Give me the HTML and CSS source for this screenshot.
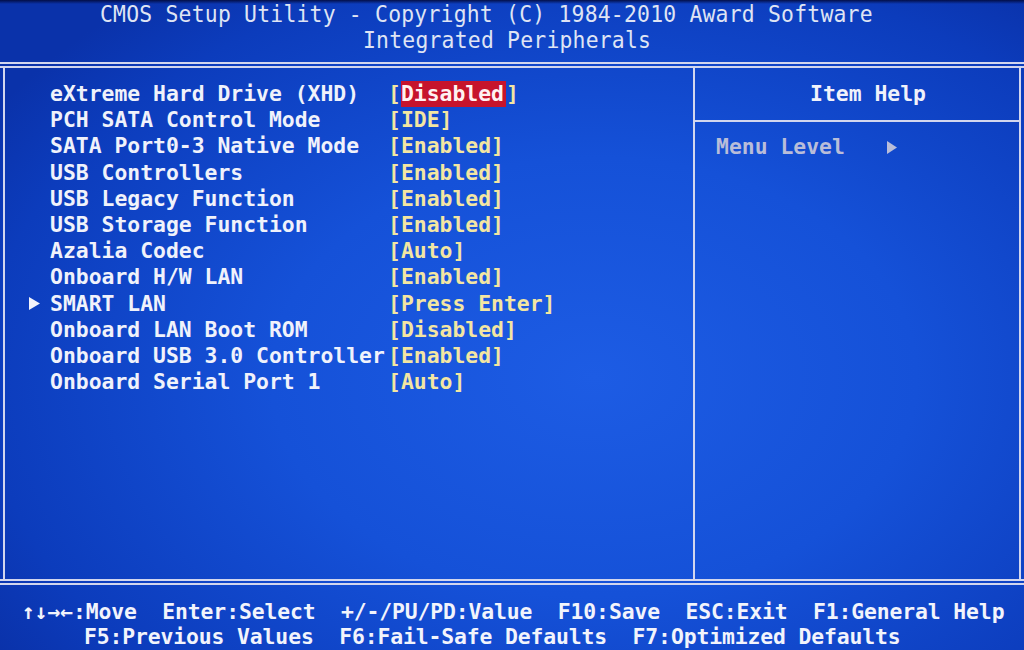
FILE: index.html
```html
<!DOCTYPE html>
<html lang="en">
	<head>
		<meta charset="UTF-8">
		<title>CMOS Setup Utility</title>
		<link rel="stylesheet" href="styles.css">
	</head>
	<body>
		<div class="screen">
			<div class="title">
				<div class="title-line first">CMOS Setup Utility - Copyright (C) 1984-2010 Award Software</div>
				<div class="title-line second">Integrated Peripherals</div>
			</div>

			<div class="frame">
				<div class="panel">
					<div class="settings">
						<div class="row">
							<span class="marker"></span>
							<span class="name">eXtreme Hard Drive (XHD)</span>
							<span class="value">[<span class="selected">Disabled</span>]</span>
						</div>
						<div class="row">
							<span class="marker"></span>
							<span class="name">PCH SATA Control Mode</span>
							<span class="value">[IDE]</span>
						</div>
						<div class="row">
							<span class="marker"></span>
							<span class="name">SATA Port0-3 Native Mode</span>
							<span class="value">[Enabled]</span>
						</div>
						<div class="row">
							<span class="marker"></span>
							<span class="name">USB Controllers</span>
							<span class="value">[Enabled]</span>
						</div>
						<div class="row">
							<span class="marker"></span>
							<span class="name">USB Legacy Function</span>
							<span class="value">[Enabled]</span>
						</div>
						<div class="row">
							<span class="marker"></span>
							<span class="name">USB Storage Function</span>
							<span class="value">[Enabled]</span>
						</div>
						<div class="row">
							<span class="marker"></span>
							<span class="name">Azalia Codec</span>
							<span class="value">[Auto]</span>
						</div>
						<div class="row">
							<span class="marker"></span>
							<span class="name">Onboard H/W LAN</span>
							<span class="value">[Enabled]</span>
						</div>
						<div class="row">
							<span class="marker">
								<svg class="tri" width="11" height="13" viewBox="0 0 11 13"><path d="M0 0 L11 6.5 L0 13 Z" fill="#f2f3fb"/></svg>
							</span>
							<span class="name">SMART LAN</span>
							<span class="value">[Press Enter]</span>
						</div>
						<div class="row">
							<span class="marker"></span>
							<span class="name">Onboard LAN Boot ROM</span>
							<span class="value">[Disabled]</span>
						</div>
						<div class="row">
							<span class="marker"></span>
							<span class="name">Onboard USB 3.0 Controller</span>
							<span class="value">[Enabled]</span>
						</div>
						<div class="row">
							<span class="marker"></span>
							<span class="name">Onboard Serial Port 1</span>
							<span class="value">[Auto]</span>
						</div>
					</div>

					<div class="help">
						<div class="help-head">Item Help</div>
						<div class="help-body">
							<span class="menu-level">Menu Level</span>
							<svg class="help-tri" width="10" height="13" viewBox="0 0 10 13"><path d="M0 0 L10 6.5 L0 13 Z" fill="#b9bdd9"/></svg>
						</div>
					</div>
				</div>
			</div>

			<div class="keys">
				<div class="keys-line">↑↓→←:Move  Enter:Select  +/-/PU/PD:Value  F10:Save  ESC:Exit  F1:General Help</div>
				<div class="keys-line second">F5:Previous Values  F6:Fail-Safe Defaults  F7:Optimized Defaults</div>
			</div>
		</div>
	</body>
</html>
```

FILE: styles.css
```css
html, body {
	margin: 0;
	padding: 0;
}

body {
	width: 1024px;
	height: 650px;
	overflow: hidden;
	font-family: 'DejaVu Sans Mono', 'Liberation Mono', monospace;
	font-size: 21.4px;
	color: #eef0fa;
	background-color: #1148d0;
	background-image:
		linear-gradient(180deg, rgba(2, 10, 60, 0.9) 0px, rgba(2, 10, 60, 0) 4px),
		radial-gradient(ellipse 70% 75% at 58% 58%, #1d5ce4 0%, #1551d8 45%, #0c3cbc 85%, #0a32aa 100%);
}

.screen {
	display: flex;
	flex-direction: column;
	height: 650px;
}

.title {
	padding: 1px 0 8px;
	color: #dfe4f4;
	font-weight: normal;
	line-height: 26px;
	height: 53px;
	letter-spacing: 0.22px;
}

.title-line {
	white-space: pre;
	transform: scaleY(1.08);
}

.title-line.first {
	padding-left: 100px;
}

.title-line.second {
	padding-left: 363px;
}

.frame {
	border-top: 6px double #d2d6ee;
	border-bottom: 6px double #d2d6ee;
	height: 511px;
}

.panel {
	display: flex;
	height: 100%;
	margin: 0 3px;
	border-left: 2px solid #d2d6ee;
	border-right: 2px solid #d2d6ee;
}

.settings {
	width: 688px;
	padding-top: 13px;
	border-right: 2px solid #d2d6ee;
	font-weight: bold;
}

.row {
	display: flex;
	align-items: center;
	height: 26.2px;
	line-height: 26px;
	white-space: pre;
}

.marker {
	width: 45px;
	display: flex;
	align-items: center;
	justify-content: flex-end;
	padding-right: 10px;
	box-sizing: border-box;
}

.tri {
	display: block;
}

.name {
	width: 338px;
	color: #f0f2fb;
}

.value {
	color: #f3e6a2;
}

.selected {
	display: inline-block;
	background-color: #c6142c;
	color: #fff2f2;
	height: 26px;
	padding-right: 2px;
}

.help {
	flex: 1;
	display: flex;
	flex-direction: column;
}

.help-head {
	height: 52px;
	line-height: 52px;
	border-bottom: 2px solid #d2d6ee;
	padding-left: 115px;
	font-weight: bold;
	color: #f0f2fb;
}

.help-body {
	display: flex;
	align-items: center;
	padding: 12px 0 0 21px;
	height: 26px;
	line-height: 26px;
	color: #b9bdd9;
	font-weight: bold;
}

.help-tri {
	margin-left: 42px;
}

.keys {
	padding: 14px 0 0 22px;
	font-weight: bold;
	line-height: 25px;
	color: #f2f4fc;
	letter-spacing: -0.12px;
}

.keys-line {
	white-space: pre;
}

.keys-line.second {
	padding-left: 62px;
}
```
